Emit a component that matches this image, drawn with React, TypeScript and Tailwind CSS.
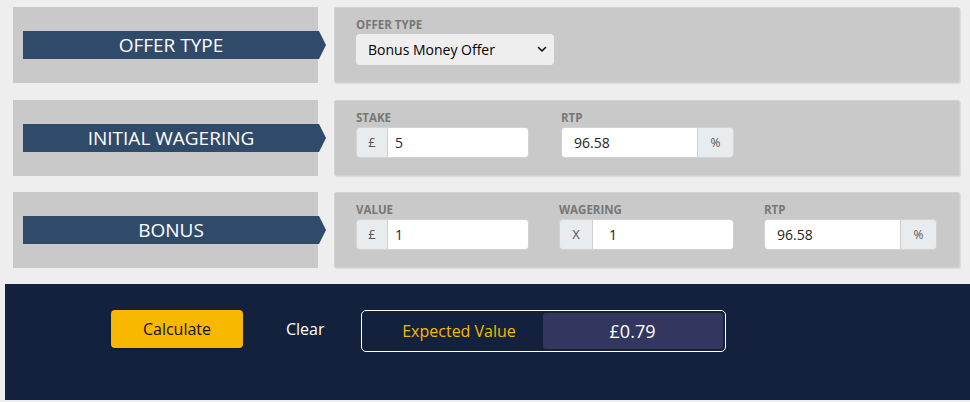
import React from 'react';

const Banner: React.FC<{ title: string }> = ({ title }) => (
    <div className="w-[305px] shrink-0 h-[76px] bg-[#c9c9c9] flex items-center">
        <div className="ml-[10px] shrink-0 w-[303px] h-[28px] bg-[#304a69] text-white text-[19px] leading-[28px] flex items-center justify-center pr-[7px] [clip-path:polygon(0_0,calc(100%-7px)_0,100%_50%,calc(100%-7px)_100%,0_100%)]">
            {title}
        </div>
    </div>
);

const Label: React.FC<{ children: React.ReactNode }> = ({ children }) => (
    <div className="text-[11.5px] font-bold text-[#777] leading-[16px] mb-px">{children}</div>
);

const Group: React.FC<{ prefix?: string; suffix?: string; value: string; pad?: string; valueClass?: string; prefixW?: string }> = ({
    prefix,
    suffix,
    value,
    pad = 'pl-[7px]',
    valueClass = 'text-[#1b2744]',
    prefixW = 'w-[31px]',
}) => (
    <div className="flex h-[31px] rounded-[4px] overflow-hidden border border-[#d3d3d3]">
        {prefix && (
            <div className={`${prefixW} shrink-0 bg-[#e9ecef] border-r border-[#cfcfcf] flex items-center justify-center text-[13px] text-[#555]`}>
                {prefix}
            </div>
        )}
        <div className={`flex-1 bg-white flex items-center text-[14px] ${pad} ${valueClass}`}>{value}</div>
        {suffix && (
            <div className="w-[36px] shrink-0 bg-[#e9ecef] border-l border-[#cfcfcf] flex items-center justify-center text-[12px] text-[#555]">
                {suffix}
            </div>
        )}
    </div>
);

const Panel: React.FC<{ children: React.ReactNode }> = ({ children }) => (
    <div className="flex-1 h-[76px] bg-[#c9c9c9] rounded-[2px] shadow-[1px_1px_1px_rgba(0,0,0,0.08)] border border-[#d2d2d2] pl-[21px] pt-[9px]">
        {children}
    </div>
);

export default function App() {
    return (
        <div className="w-[970px] h-[402px] bg-[#eeeeee] pl-[5px] pt-[7px] font-['Open_Sans',sans-serif]">
            <div className="flex flex-col gap-4 pl-2 pr-[10px]">
                <div className="flex gap-4">
                    <Banner title="OFFER TYPE" />
                    <Panel>
                        <Label>OFFER TYPE</Label>
                        <div className="w-[198px] h-[31px] bg-[#eeeeee] rounded-[4px] flex items-center justify-between pl-3 pr-[7px] text-[14px] text-black">
                            <span>Bonus Money Offer</span>
                            <svg width="10" height="7" viewBox="0 0 10 7" fill="none">
                                <path d="M1.5 1.5 5 5 8.5 1.5" stroke="#111" strokeWidth="1.6" strokeLinecap="round" strokeLinejoin="round" />
                            </svg>
                        </div>
                    </Panel>
                </div>

                <div className="flex gap-4 mt-px">
                    <Banner title="INITIAL WAGERING" />
                    <Panel>
                        <div className="grid grid-cols-[173px_173px] gap-x-8">
                            <div>
                                <Label>STAKE</Label>
                                <Group prefix="£" value="5" />
                            </div>
                            <div>
                                <Label>RTP</Label>
                                <Group suffix="%" value="96.58" pad="pl-3" valueClass="text-[#222]" />
                            </div>
                        </div>
                    </Panel>
                </div>

                <div className="flex gap-4">
                    <Banner title="BONUS" />
                    <Panel>
                        <div className="grid grid-cols-[173px_175px_173px] gap-x-[30px]">
                            <div>
                                <Label>VALUE</Label>
                                <Group prefix="£" value="1" />
                            </div>
                            <div>
                                <Label>WAGERING</Label>
                                <Group prefix="X" value="1" pad="pl-4" prefixW="w-[33px]" valueClass="text-[#222]" />
                            </div>
                            <div>
                                <Label>RTP</Label>
                                <Group suffix="%" value="96.58" pad="pl-3" valueClass="text-[#222]" />
                            </div>
                        </div>
                    </Panel>
                </div>
            </div>

            <div className="mt-4 h-[116px] bg-[#14213d] flex items-start pt-[26px] pl-[106px]">
                <button className="w-[132px] h-[38px] bg-[#f9b800] rounded-[4px] shadow-[0_1px_2px_rgba(0,0,0,0.3)] text-[16px] text-[#111] flex items-center justify-center">
                    Calculate
                </button>
                <button className="ml-[43px] h-[38px] text-[16px] text-white flex items-center">Clear</button>
                <div className="ml-[36px] w-[365px] h-[42px] border border-white rounded-[5px] flex items-stretch p-[2px] pl-0">
                    <div className="w-[181px] flex items-center justify-center pl-[14px] text-[16px] text-[#f9b800]">Expected Value</div>
                    <div className="flex-1 bg-[#33365f] rounded-[3px] flex items-center justify-center text-[18px] text-white">£0.79</div>
                </div>
            </div>
        </div>
    );
}
